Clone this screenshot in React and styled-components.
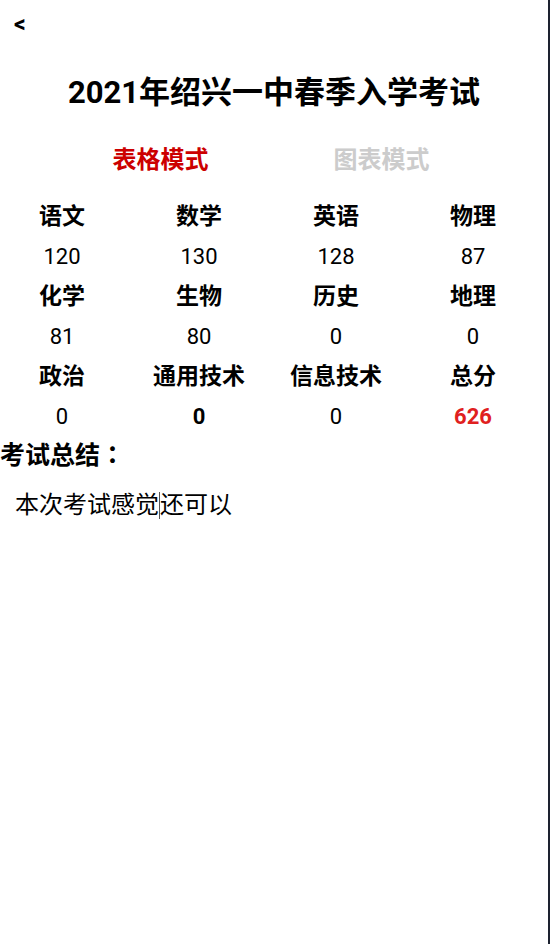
import React from "react";
import styled, { createGlobalStyle } from "styled-components";

const GlobalStyle = createGlobalStyle`
  html, body {
    margin: 0;
    padding: 0;
    background: #fff;
  }
  body {
    font-family: Roboto, "Noto Sans CJK SC", sans-serif;
    color: #000;
  }
`;

const Page = styled.div`
  box-sizing: border-box;
  width: 550px;
  min-height: 944px;
  border-right: 2px solid #1d2230;
  background: #fff;
`;

const TopBar = styled.div`
  height: 48px;
  display: flex;
  align-items: center;
  padding-left: 14px;
`;

const BackButton = styled.span`
  font-size: 23px;
  font-weight: 700;
  line-height: 1;
  cursor: pointer;
`;

const Title = styled.h1`
  margin: 0;
  padding-top: 22px;
  height: 46px;
  line-height: 46px;
  text-align: center;
  font-size: 31px;
  font-weight: 700;
`;

const Tabs = styled.div`
  margin-top: 22px;
  display: flex;
  justify-content: center;
  padding-right: 6px;
`;

const Tab = styled.div`
  width: 221px;
  height: 44px;
  line-height: 44px;
  text-align: center;
  font-size: 24px;
  font-weight: 700;
  color: ${(p) => (p.$active ? "#cc0000" : "#cccccc")};
`;

const Grid = styled.div`
  margin-top: 15px;
  display: grid;
  grid-template-columns: repeat(4, 1fr);
`;

const Cell = styled.div`
  height: 40px;
  line-height: 40px;
  padding-right: 13px;
  text-align: center;
  font-size: ${(p) => (p.$head ? "23px" : "22px")};
  font-weight: ${(p) => (p.$bold ? 700 : 400)};
  color: ${(p) => p.$color || "#000"};
`;

const SummaryTitle = styled.div`
  height: 38px;
  line-height: 38px;
  font-family: Roboto, "Noto Sans CJK TC", sans-serif;
  font-size: 25px;
  font-weight: 700;
`;

const SummaryText = styled.div`
  margin-top: 15px;
  padding-left: 15px;
  height: 30px;
  line-height: 30px;
  font-size: 24px;
  display: flex;
  align-items: center;
`;

const Caret = styled.span`
  display: inline-block;
  width: 1px;
  height: 27px;
  background: #555;
`;

const rows = [
  [
    ["语文", "120"],
    ["数学", "130"],
    ["英语", "128"],
    ["物理", "87"],
  ],
  [
    ["化学", "81"],
    ["生物", "80"],
    ["历史", "0"],
    ["地理", "0"],
  ],
  [
    ["政治", "0"],
    ["通用技术", "0", true],
    ["信息技术", "0"],
    ["总分", "626", true, "#e02020"],
  ],
];

export default () => {
  return (
    <Page>
      <GlobalStyle />
      <TopBar>
        <BackButton>&lt;</BackButton>
      </TopBar>
      <Title>2021年绍兴一中春季入学考试</Title>
      <Tabs>
        <Tab $active>表格模式</Tab>
        <Tab>图表模式</Tab>
      </Tabs>
      <Grid>
        {rows.map((row, ri) => (
          <React.Fragment key={ri}>
            {row.map(([name]) => (
              <Cell key={name} $head $bold>
                {name}
              </Cell>
            ))}
            {row.map(([name, score, bold, color]) => (
              <Cell key={name + "-v"} $bold={bold} $color={color}>
                {score}
              </Cell>
            ))}
          </React.Fragment>
        ))}
      </Grid>
      <SummaryTitle>考试总结：</SummaryTitle>
      <SummaryText>
        本次考试感觉
        <Caret />
        还可以
      </SummaryText>
    </Page>
  );
};
